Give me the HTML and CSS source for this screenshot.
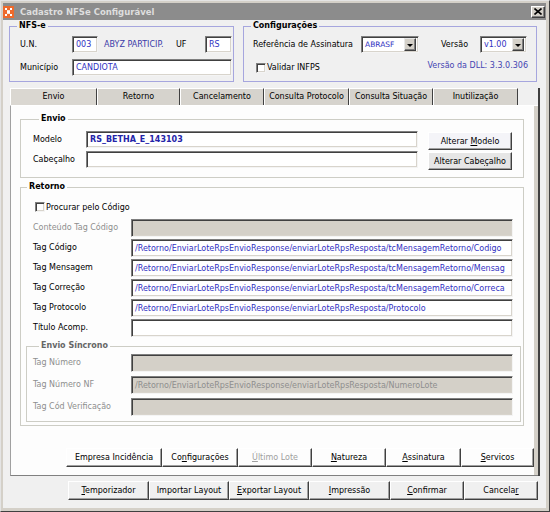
FILE: index.html
```html
<!DOCTYPE html>
<html lang="pt-BR">
<head>
<meta charset="utf-8">
<title>Cadastro NFSe Configurável</title>
<link rel="stylesheet" href="styles.css">
</head>
<body>
<div class="window">
  <div class="titlebar">
    <svg class="app-icon" width="11" height="12" viewBox="0 0 11 12">
      <rect x="0" y="0" width="11" height="12" fill="#ee6a2c"/>
      <rect x="2" y="2" width="2" height="2" fill="#fff"/>
      <rect x="7" y="2" width="2" height="2" fill="#fff"/>
      <rect x="4" y="4" width="3" height="1" fill="#fde2d2"/>
      <rect x="4" y="5" width="3" height="2" fill="#fff"/>
      <rect x="2" y="8" width="2" height="2" fill="#fff"/>
      <rect x="7" y="8" width="2" height="2" fill="#fff"/>
      <rect x="4" y="7" width="3" height="1" fill="#fde2d2"/>
    </svg>
    <span class="title">Cadastro NFSe Configurável</span>
    <span class="close-btn">
      <svg width="8" height="7" viewBox="0 0 8 7"><path d="M0.5 0.5 L7.5 6.5 M7.5 0.5 L0.5 6.5" stroke="#000" stroke-width="1.6" fill="none"/></svg>
    </span>
  </div>

  <div class="client">
    <div class="top-row">
      <fieldset class="grp grp-blue grp-nfse">
        <legend>NFS-e</legend>
        <div class="frow">
          <span class="lbl lbl-nfse">U.N.</span>
          <span class="edit blue edit-un">003</span>
          <span class="info">ABYZ PARTICIP.</span>
          <span class="lbl lbl-uf">UF</span>
          <span class="edit blue edit-uf">RS</span>
        </div>
        <div class="frow">
          <span class="lbl lbl-nfse">Município</span>
          <span class="edit blue edit-mun">CANDIOTA</span>
        </div>
      </fieldset>

      <fieldset class="grp grp-blue grp-conf">
        <legend>Configurações</legend>
        <div class="frow">
          <span class="lbl lbl-ref">Referência de Assinatura</span>
          <span class="combo combo-ref"><span class="combo-text">ABRASF</span><span class="combo-arrow"></span></span>
          <span class="lbl lbl-versao">Versão</span>
          <span class="combo combo-ver"><span class="combo-text">v1.00</span><span class="combo-arrow"></span></span>
        </div>
        <div class="frow frow-check">
          <span class="check"></span>
          <span class="lbl check-lbl">Validar INFPS</span>
          <span class="dll">Versão da DLL: 3.3.0.306</span>
        </div>
      </fieldset>
    </div>

    <div class="pagectl">
      <div class="tabs">
        <span class="tab tab-active t1">Envio</span>
        <span class="tab t2">Retorno</span>
        <span class="tab t3">Cancelamento</span>
        <span class="tab t4">Consulta Protocolo</span>
        <span class="tab t5">Consulta Situação</span>
        <span class="tab t6">Inutilização</span>
      </div>
      <div class="page">
        <div class="sheet">
          <fieldset class="grp grp-gray grp-envio">
            <legend>Envio</legend>
            <div class="envio-grid">
              <span class="lbl">Modelo</span>
              <span class="edit edit-envio edit-modelo">RS_BETHA_E_143103</span>
              <span class="btn btn-light"><span>Alterar <u>M</u>odelo</span></span>
              <span class="lbl">Cabeçalho</span>
              <span class="edit edit-envio"></span>
              <span class="btn btn-gray"><span>Alterar Cabe<u>ç</u>alho</span></span>
            </div>
          </fieldset>

          <fieldset class="grp grp-gray grp-retorno">
            <legend>Retorno</legend>
            <div class="check-row">
              <span class="check"></span>
              <span class="lbl check-lbl">Procurar pelo Código</span>
            </div>
            <div class="rrow first">
              <span class="lbl lbl-row disabled">Conteúdo Tag Código</span>
              <span class="edit edit-row edit-disabled"></span>
            </div>
            <div class="rrow">
              <span class="lbl lbl-row">Tag Código</span>
              <span class="edit edit-row blue">/Retorno/EnviarLoteRpsEnvioResponse/enviarLoteRpsResposta/tcMensagemRetorno/Codigo</span>
            </div>
            <div class="rrow">
              <span class="lbl lbl-row">Tag Mensagem</span>
              <span class="edit edit-row blue">/Retorno/EnviarLoteRpsEnvioResponse/enviarLoteRpsResposta/tcMensagemRetorno/Mensag</span>
            </div>
            <div class="rrow">
              <span class="lbl lbl-row">Tag Correção</span>
              <span class="edit edit-row blue">/Retorno/EnviarLoteRpsEnvioResponse/enviarLoteRpsResposta/tcMensagemRetorno/Correca</span>
            </div>
            <div class="rrow">
              <span class="lbl lbl-row">Tag Protocolo</span>
              <span class="edit edit-row blue">/Retorno/EnviarLoteRpsEnvioResponse/enviarLoteRpsResposta/Protocolo</span>
            </div>
            <div class="rrow">
              <span class="lbl lbl-row">Título Acomp.</span>
              <span class="edit edit-row"></span>
            </div>

            <fieldset class="grp grp-gray grp-sinc">
              <legend class="legend-disabled">Envio Síncrono</legend>
              <div class="srow">
                <span class="lbl lbl-row disabled">Tag Número</span>
                <span class="edit edit-row edit-disabled"></span>
              </div>
              <div class="srow">
                <span class="lbl lbl-row disabled">Tag Número NF</span>
                <span class="edit edit-row edit-disabled">/Retorno/EnviarLoteRpsEnvioResponse/enviarLoteRpsResposta/NumeroLote</span>
              </div>
              <div class="srow">
                <span class="lbl lbl-row disabled">Tag Cód Verificação</span>
                <span class="edit edit-row edit-disabled"></span>
              </div>
            </fieldset>
          </fieldset>

          <div class="btnrow btnrow-page">
            <span class="btn b-emp"><span>Empresa Incidência</span></span>
            <span class="btn b-conf"><span>Co<u>n</u>figurações</span></span>
            <span class="btn b-ult btn-disabled"><span><u>Ú</u>ltimo Lote</span></span>
            <span class="btn b-nat"><span><u>N</u>atureza</span></span>
            <span class="btn b-ass"><span><u>A</u>ssinatura</span></span>
            <span class="btn b-ser"><span><u>S</u>ervicos</span></span>
          </div>
        </div>
      </div>
    </div>

    <div class="btnrow btnrow-win">
      <span class="btn w80"><span><u>T</u>emporizador</span></span>
      <span class="btn w80b"><span>Importar Layout</span></span>
      <span class="btn w80b"><span><u>E</u>xportar Layout</span></span>
      <span class="btn w80"><span><u>I</u>mpressão</span></span>
      <span class="btn w74"><span><u>C</u>onfirmar</span></span>
      <span class="btn w74"><span>Cancela<u>r</u></span></span>
    </div>
  </div>
</div>
</body>
</html>
```

FILE: styles.css
```css
* { box-sizing: border-box; }

html, body {
  margin: 0;
  padding: 0;
}

body {
  width: 550px;
  height: 512px;
  overflow: hidden;
  background: #d4d0c8;
  font-family: "DejaVu Sans", "Liberation Sans", sans-serif;
  font-size: 8px;
  color: #000;
}

.window {
  width: 550px;
  height: 512px;
  display: flex;
  flex-direction: column;
  background: #d4d0c8;
  border: 1px solid;
  border-color: #e4e4e4 #404040 #404040 #e4e4e4;
  padding: 2px 3px 3px 2px;
}

/* ---------- title bar ---------- */
.titlebar {
  height: 17px;
  flex: none;
  display: flex;
  align-items: center;
  background: #8c8c8c;
  color: #dedede;
  font-weight: bold;
  font-size: 8.5px;
}

.app-icon {
  flex: none;
  margin-right: 6px;
}

.title {
  flex: 1;
  white-space: nowrap;
}

.close-btn {
  width: 14px;
  height: 12px;
  margin-right: 1px;
  display: flex;
  align-items: center;
  justify-content: center;
  background: #d4d0c8;
  border: 1px solid;
  border-color: #fff #404040 #404040 #fff;
  box-shadow: inset -1px -1px 0 #808080;
}

/* ---------- client ---------- */
.client {
  flex: 1;
  display: flex;
  flex-direction: column;
  background: #f0f0f0;
}

.top-row {
  display: flex;
  gap: 9px;
  padding-left: 6px;
}

fieldset {
  margin: 0;
  padding: 0;
  border: 1px solid;
  min-width: 0;
}

legend {
  padding: 0 2px;
  margin-left: 6px;
  height: 12px;
  line-height: 12px;
  font-weight: bold;
  white-space: nowrap;
}

.grp-blue { border-color: #a6a6de; }
.grp-blue > legend { margin-left: 7px; }
.grp-gray { border-color: #cdcdc5; }

.grp-nfse {
  width: 225px;
  height: 62px;
  padding-top: 4px;
}

.grp-conf {
  width: 294px;
  height: 62px;
  padding-top: 4px;
}

.frow {
  display: flex;
  align-items: center;
  height: 17px;
}

.frow + .frow { margin-top: 6px; }

.lbl {
  white-space: nowrap;
  line-height: 17px;
}

.lbl-nfse {
  width: 52px;
  margin-left: 10px;
}

.edit {
  display: block;
  height: 17px;
  line-height: 14px;
  padding: 1px 2px 0 3px;
  background: #fff;
  border: 1px solid;
  border-color: #7f7f7f #f4f4f4 #f4f4f4 #7f7f7f;
  box-shadow: inset 1px 1px 0 #404040, inset -1px -1px 0 #d8d4cc;
  overflow: hidden;
  white-space: nowrap;
}

.blue { color: #3131c2; }

.edit-un { width: 26px; }
.edit-uf { width: 27px; }
.edit-mun { width: 160px; }

.info {
  width: 72px;
  margin-left: 6px;
  color: #3a3aa8;
  white-space: nowrap;
}

.lbl-uf { width: 29px; }

.lbl-ref {
  width: 108px;
  margin-left: 9px;
}

.lbl-versao {
  width: 39px;
  margin-left: 22px;
}

.combo {
  display: flex;
  align-items: center;
  height: 17px;
  padding: 2px;
  background: #fff;
  border: 1px solid;
  border-color: #7f7f7f #f4f4f4 #f4f4f4 #7f7f7f;
  box-shadow: inset 1px 1px 0 #404040, inset -1px -1px 0 #d8d4cc;
}

.combo-ref { width: 58px; }
.combo-ver { width: 47px; }

.combo-text {
  flex: 1;
  color: #3131c2;
  padding-left: 1px;
  white-space: nowrap;
  overflow: hidden;
  line-height: 13px;
}

.combo-ref .combo-text { font-size: 7.5px; }

.combo-arrow {
  width: 12px;
  height: 13px;
  flex: none;
  display: flex;
  align-items: center;
  justify-content: center;
  background: #d4d0c8;
  border: 1px solid;
  border-color: #e8e8e8 #404040 #404040 #e8e8e8;
  box-shadow: inset -1px -1px 0 #808080;
}

.combo-arrow::after {
  content: "";
  border-left: 3px solid transparent;
  border-right: 3px solid transparent;
  border-top: 3px solid #000;
  margin-top: 1px;
}

.check {
  width: 10px;
  height: 10px;
  flex: none;
  background: #fff;
  border: 1px solid;
  border-color: #808080 #f4f4f4 #f4f4f4 #808080;
  box-shadow: inset 1px 1px 0 #404040, inset -1px -1px 0 #d8d4cc;
}

.frow-check .check { margin-left: 12px; }

.check-lbl { margin-left: 1px; }

.dll {
  margin-left: auto;
  margin-right: 8px;
  margin-bottom: 4px;
  color: #4444b2;
  white-space: nowrap;
}

/* ---------- page control ---------- */
.pagectl {
  margin: 6px 0 0 7px;
  width: 530px;
  border-right: 2px solid #404040;
}

.tabs {
  display: flex;
  height: 17px;
}

.tab {
  height: 17px;
  line-height: 15px;
  text-align: center;
  white-space: nowrap;
  background: #d6d3cd;
  border-top: 1px solid #fff;
  border-left: 1px solid #fff;
  border-right: 1px solid #404040;
}

.tab-active { background: #dad7d1; }

.t1 { width: 87px; }
.t2 { width: 83px; }
.t3 { width: 84px; }
.t4 { width: 85px; }
.t5 { width: 84px; }
.t6 { width: 85px; }

.page {
  height: 371px;
  display: flex;
  background: #d4d0c8;
  border-left: 1px solid #a0a0a0;
  border-top: 1px solid #fff;
  border-bottom: 1px solid #808080;
}

.sheet {
  flex: 1;
  margin-right: 5px;
  background: #fdfdfd;
  display: flex;
  flex-direction: column;
  padding: 7px 0 0 9px;
}

.grp-envio {
  width: 504px;
  padding: 6px 0 6px 12px;
}

.envio-grid {
  display: grid;
  grid-template-columns: 53px 342px 84px;
  grid-auto-rows: 20px;
  align-items: start;
}

.edit-envio { width: 332px; }

.edit-modelo {
  font-weight: bold;
  color: #2424a8;
}

.btn {
  display: flex;
  align-items: center;
  justify-content: center;
  height: 19px;
  white-space: nowrap;
  border: 1px solid;
  border-color: #fff #404040 #404040 #fff;
  box-shadow: inset -1px -1px 0 #a0a0a0;
}

.envio-grid .btn {
  height: 18px;
  margin-top: 1px;
}

.btn-light { background: #f4f4f8; }
.btn-gray { background: #e6e6e6; }

.grp-retorno {
  width: 504px;
  margin-top: 3px;
  padding: 0 0 3px 0;
}

.check-row {
  display: flex;
  align-items: center;
  height: 14px;
  margin-top: 7px;
  padding-left: 14px;
}

.rrow,
.srow {
  display: flex;
  align-items: center;
  height: 18px;
}

.rrow {
  padding-left: 12px;
  margin-top: 2px;
}

.rrow.first { margin-top: 5px; }

.lbl-row {
  width: 98px;
  line-height: 18px;
}

.edit-row {
  width: 382px;
  height: 18px;
  line-height: 15px;
}

.disabled { color: #8e8e8e; }

.edit-disabled {
  background: #d4d0c8;
  color: #8e8e8e;
}

.grp-sinc {
  width: 495px;
  margin: 3px 0 0 5px;
  padding: 2px 0 5px 6px;
}

.legend-disabled { color: #666; }

.srow + .srow { margin-top: 4px; }

/* ---------- button rows ---------- */
.btnrow {
  display: flex;
}

.btnrow-page {
  margin: 22px 0 0 46px;
}

.b-emp { width: 96px; }
.b-conf { width: 76px; }
.b-ult { width: 74px; }
.b-nat { width: 74px; }
.b-ass { width: 75px; }
.b-ser { width: 73px; }

.btn-disabled { color: #a0a0a0; }

.btnrow-win {
  margin: 5px 0 0 65px;
}

.w80 { width: 81px; }
.w80b { width: 80px; }
.w74 { width: 74px; }

u { text-decoration-thickness: 1px; text-underline-offset: 1px; }
```
